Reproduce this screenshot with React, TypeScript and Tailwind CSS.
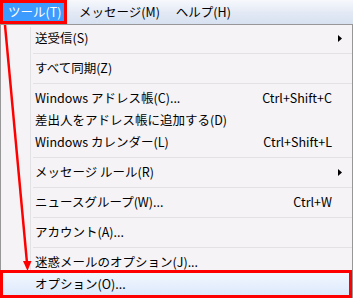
import React from "react";

type Item =
  | { type: "sep" }
  | { type: "item"; label: string; shortcut?: string; sub?: boolean; hot?: boolean };

const items: Item[] = [
  { type: "item", label: "送受信(S)", sub: true },
  { type: "sep" },
  { type: "item", label: "すべて同期(Z)" },
  { type: "sep" },
  { type: "item", label: "Windows アドレス帳(C)...", shortcut: "Ctrl+Shift+C" },
  { type: "item", label: "差出人をアドレス帳に追加する(D)" },
  { type: "item", label: "Windows カレンダー(L)", shortcut: "Ctrl+Shift+L" },
  { type: "sep" },
  { type: "item", label: "メッセージ ルール(R)", sub: true },
  { type: "sep" },
  { type: "item", label: "ニュースグループ(W)...", shortcut: "Ctrl+W" },
  { type: "sep" },
  { type: "item", label: "アカウント(A)..." },
  { type: "sep" },
  { type: "item", label: "迷惑メールのオプション(J)..." },
  { type: "item", label: "オプション(O)...", hot: true },
];

export default function App() {
  return (
    <div
      className="relative w-[353px] h-[298px] overflow-hidden bg-[#f5f3f6] text-[12.5px] text-black"
      style={{ fontFamily: '"Noto Sans CJK JP", "Noto Sans", sans-serif' }}
    >
      {/* menu bar */}
      <div className="flex h-[24px] items-stretch bg-gradient-to-b from-[#f6f8fc] via-[#e4eaf5] to-[#d7e1f0]">
        <div className="flex w-[67px] items-center border-[3px] border-[#ff0000] bg-[#3d9bfd] pl-[5px] text-white">
          ツール(T)
        </div>
        <div className="flex items-center pl-[12px]">メッセージ(M)</div>
        <div className="flex items-center pl-[16px]">ヘルプ(H)</div>
      </div>

      {/* dropdown */}
      <div className="flex h-[274px] flex-col border border-b-0 border-[#979797] bg-[#f5f3f6] pt-[2px]">
        {items.map((it, i) =>
          it.type === "sep" ? (
            <div key={i} className="flex h-[8px] shrink-0">
              <div className="w-[29px] shrink-0" />
              <div className="w-[2px] shrink-0 border-l border-[#e2e1e3]" />
              <div className="flex flex-1 items-center pl-[1px]">
                <div className="w-full border-t border-[#e2e1e3]" />
              </div>
            </div>
          ) : (
            <div
              key={i}
              className={
                "flex h-[22px] shrink-0 items-stretch " +
                (it.hot ? "bg-gradient-to-b from-[#f2f7fe] to-[#dde9fb]" : "")
              }
            >
              <div className="w-[29px] shrink-0" />
              <div className={"w-[2px] shrink-0 border-l " + (it.hot ? "border-transparent" : "border-[#e2e1e3]")} />
              <div className="flex flex-1 items-center pl-[3px] leading-none">{it.label}</div>
              {it.shortcut && (
                <div className="flex items-center leading-none">{it.shortcut}</div>
              )}
              <div className="flex w-[20px] shrink-0 items-center pl-[6px]">
                {it.sub && (
                  <svg width="4" height="7" viewBox="0 0 4 7">
                    <polygon points="0,0 4,3.5 0,7" fill="#000" />
                  </svg>
                )}
              </div>
            </div>
          )
        )}
      </div>

      {/* annotation: red box around option */}
      <div className="pointer-events-none absolute left-0 top-[270px] h-[28px] w-[352px] border-[3px] border-[#ff0000]" />

      {/* annotation: red arrow */}
      <svg className="pointer-events-none absolute left-0 top-0" width="353" height="298" viewBox="0 0 353 298">
        <line x1="5" y1="25" x2="27" y2="263" stroke="#ff0000" strokeWidth="2.5" />
        <polygon points="23,261 31.5,261 27.5,271" fill="#ff0000" />
      </svg>
    </div>
  );
}
